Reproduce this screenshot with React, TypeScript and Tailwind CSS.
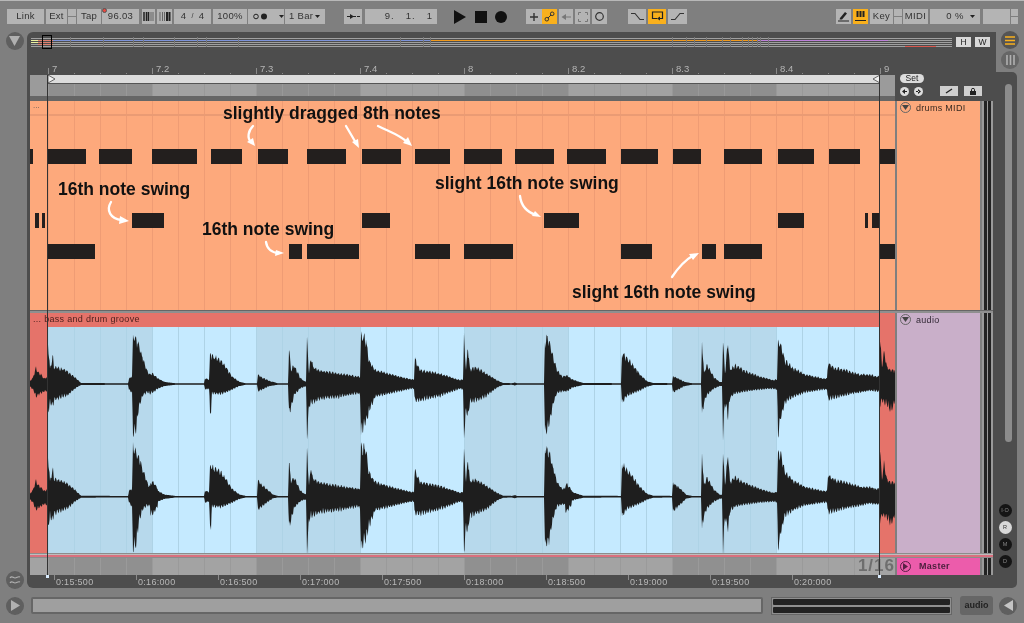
import React from "react";

const F = "font-['Liberation_Sans',Arial,sans-serif]";

function Btn({ className = "", children, on = false }: { className?: string; children?: React.ReactNode; on?: boolean }) {
  return (
    <div className={`relative shrink-0 h-[15px] flex items-center justify-center text-[9.5px] tracking-[0.3px] text-[#333] ${on ? "bg-[#f9b01c]" : "bg-[#b4b4b4]"} ${className}`}>
      {children}
    </div>
  );
}

function Stack({ className = "" }: { className?: string }) {
  return (
    <div className={`h-[15px] shrink-0 flex flex-col justify-between ${className}`}>
      <div className="h-[7px] bg-[#b4b4b4]" />
      <div className="h-[7px] bg-[#b4b4b4]" />
    </div>
  );
}

function Toolbar() {
  return (
    <div className="h-[32px] shrink-0 flex items-center pl-[7px] bg-[#7f7f7f] border-t-[1px] border-[#b8b8b8]">
      <Btn className="w-[37px]">Link</Btn>
      <Btn className="w-[21px] ml-[2px]">Ext</Btn>
      <Stack className="w-[8px] ml-[1px]" />
      <Btn className="w-[24px] ml-[1px]">Tap</Btn>
      <Btn className="w-[37px] ml-[1px]">
        96.03
        <span className="absolute left-[0px] top-[-1px] w-[5px] h-[5px] rounded-full bg-[#e8483f] border border-[#555]" />
      </Btn>
      <Btn className="w-[13px] ml-[3px]">
        <svg width="11" height="9"><path d="M1 0v9M3.5 0v9M5.5 0v9" stroke="#222" strokeWidth="1.5" /><path d="M8 0v9M10 0v9" stroke="#444" strokeWidth=".7" /></svg>
      </Btn>
      <Btn className="w-[15px] ml-[2px]">
        <svg width="12" height="9"><path d="M1 0v9M3.5 0v9M5.5 0v9" stroke="#444" strokeWidth=".7" /><path d="M8 0v9M10.5 0v9" stroke="#222" strokeWidth="2" /></svg>
      </Btn>
      <Btn className="w-[37px] ml-[2px] gap-[5px]">4 <span className="text-[7px]">/</span> 4</Btn>
      <Btn className="w-[34px] ml-[2px]">100%</Btn>
      <Btn className="w-[36px] ml-[1px] justify-start">
        <svg width="34" height="9" className="ml-[5px]">
          <circle cx="3" cy="4.5" r="2.3" fill="none" stroke="#222" />
          <circle cx="11" cy="4.5" r="3" fill="#222" />
          <path d="M26 3h5l-2.5 3z" fill="#222" />
        </svg>
      </Btn>
      <Btn className="w-[40px] ml-[1px] justify-start pl-[4px]">
        1 Bar
        <svg width="6" height="4" className="absolute right-[4px] top-[6px]"><path d="M0 0h5l-2.5 3z" fill="#222" /></svg>
      </Btn>
      <Btn className="w-[18px] ml-[19px]">
        <svg width="15" height="7"><path d="M1 3.5h3M11 3.5h3" stroke="#222" /><path d="M4 1v5l4-2.5z" fill="#222" /><path d="M7 3.5h3" stroke="#222" /></svg>
      </Btn>
      <Btn className="w-[72px] ml-[3px] justify-end pr-[4px] gap-[3px] tracking-[1px]">
        <span className="mr-[8px]">9.</span><span className="mr-[8px]">1.</span><span>1</span>
      </Btn>
      <svg width="12" height="14" className="ml-[17px] shrink-0"><path d="M0 0l12 7-12 7z" fill="#111" /></svg>
      <div className="w-[12px] h-[12px] ml-[9px] bg-[#111] shrink-0" />
      <div className="w-[12px] h-[12px] ml-[8px] rounded-full bg-[#111] shrink-0" />
      <Btn className="w-[16px] ml-[19px]">
        <svg width="10" height="10"><path d="M5 1v8M1 5h8" stroke="#333" strokeWidth="1.4" /></svg>
      </Btn>
      <Btn on className="w-[15px]">
        <svg width="11" height="11"><circle cx="2.8" cy="8.2" r="1.8" fill="none" stroke="#333" /><circle cx="8.2" cy="2.8" r="1.8" fill="none" stroke="#333" /><path d="M4 7l3-3" stroke="#333" /></svg>
      </Btn>
      <Btn className="w-[14px] ml-[2px]">
        <svg width="10" height="8"><path d="M5 4h5" stroke="#777" /><path d="M0.5 4L5 1v6z" fill="#777" /></svg>
      </Btn>
      <Btn className="w-[15px] ml-[2px]">
        <svg width="10" height="10"><path d="M0.5 3V.5H3M7 .5h2.5V3M.5 7v2.5H3M9.5 7v2.5H7" fill="none" stroke="#777" /></svg>
      </Btn>
      <Btn className="w-[15px] ml-[2px]">
        <svg width="11" height="11"><circle cx="5.5" cy="5.5" r="3.8" fill="none" stroke="#333" strokeWidth="1.2" /></svg>
      </Btn>
      <Btn className="w-[18px] ml-[21px]">
        <svg width="13" height="9"><path d="M0 1.5h4l5 6h4" fill="none" stroke="#333" strokeWidth="1.1" /></svg>
      </Btn>
      <Btn on className="w-[18px] ml-[2px]">
        <svg width="13" height="11"><path d="M6 7.5H1.5V1h10v6.5H9" fill="none" stroke="#222" strokeWidth="1.2" /><path d="M9 5.5v4L6 7.5z" fill="#222" /></svg>
      </Btn>
      <Btn className="w-[19px] ml-[2px]">
        <svg width="13" height="9"><path d="M0 7.5h4l5-6h4" fill="none" stroke="#333" strokeWidth="1.1" /></svg>
      </Btn>
      <Btn className="w-[15px] ml-[149px]">
        <svg width="11" height="11"><path d="M2 7l5-6 2 1.5-5 6-2.5 0z" fill="#222" /><path d="M0 10h11" stroke="#222" /></svg>
      </Btn>
      <Btn on className="w-[15px] ml-[2px]">
        <svg width="11" height="11"><path d="M2.5 0v6M5.5 0v6M8.5 0v6" stroke="#222" strokeWidth="2" /><path d="M0 9.5h11" stroke="#222" /></svg>
      </Btn>
      <Btn className="w-[23px] ml-[2px]">Key</Btn>
      <Stack className="w-[8px] ml-[1px]" />
      <Btn className="w-[25px] ml-[1px]">MIDI</Btn>
      <Btn className="w-[50px] ml-[2px]">
        0 %
        <svg width="6" height="4" className="absolute right-[4px] top-[6px]"><path d="M0 0h5l-2.5 3z" fill="#222" /></svg>
      </Btn>
      <Btn className="w-[27px] ml-[3px]" />
      <Stack className="w-[7px] ml-[1px]" />
    </div>
  );
}

const OV_TICKS = [70, 103, 133, 143, 174, 197, 206, 238, 400, 423, 430, 672, 686, 694, 706, 722, 730, 742, 748, 752, 757, 760, 768];

function Overview() {
  return (
    <div className="h-[10px] mt-[5px] ml-[4px] flex shrink-0">
      <div className="relative w-[921px] h-[10px]">
        {[0, 2, 4, 6, 8].map((y) => (
          <div key={y} className="absolute left-0 right-0 h-px bg-[#a0a0a0]" style={{ top: y + 1 }} />
        ))}
        <div className="absolute left-[22px] w-[377px] top-[3px] h-px bg-[#7d93d9]" />
        <div className="absolute left-[399px] w-[327px] top-[3px] h-px bg-[#f09a1e]" />
        <div className="absolute left-[726px] w-[131px] top-[3px] h-px bg-[#bd82d9]" />
        <div className="absolute left-[874px] w-[31px] top-[9px] h-px bg-[#d9584f]" />
        <div className="absolute left-0 w-[7px] top-[3px] h-px bg-[#e9f29f]" />
        <div className="absolute left-0 w-[7px] top-[5px] h-px bg-[#e9f29f]" />
        <div className="absolute left-[7px] w-[15px] top-[3px] h-px bg-[#e0806f]" />
        <div className="absolute left-[7px] w-[15px] top-[5px] h-px bg-[#e0806f]" />
        <div className="absolute left-[7px] w-[15px] top-[7px] h-px bg-[#e0806f]" />
        {OV_TICKS.map((x) => (
          <div key={x} className="absolute top-0 h-[10px] w-px bg-[#777]" style={{ left: x - 31 }} />
        ))}
        <div className="absolute left-[11px] top-[-2px] w-[10px] h-[14px] border border-black" />
      </div>
      <div className="w-[15px] h-[10px] ml-[4px] bg-[#d9d9d9] text-[8.5px] leading-[10px] text-center text-[#222]">H</div>
      <div className="w-[15px] h-[10px] ml-[4px] bg-[#d9d9d9] text-[8.5px] leading-[10px] text-center text-[#222]">W</div>
    </div>
  );
}

const BARS = ["7", "7.2", "7.3", "7.4", "8", "8.2", "8.3", "8.4", "9"];

function Ruler() {
  return (
    <div className="h-[15px] mt-[13px] ml-[21px] flex shrink-0">
      {BARS.map((b, i) => (
        <div key={b} className={`${i === 8 ? "w-[20px]" : "w-[104px]"} h-[15px] relative text-[9.5px] leading-[10px] text-[#b5b5b5] pl-[4px] pt-[4px]`}>
          <span className="absolute left-0 top-[8px] w-px h-[6px] bg-[#8a8a8a]" />
          {b}
          {i < 8 && (
            <>
              <span className="absolute left-[26px] top-[13px] w-px h-px bg-[#8a8a8a]" />
              <span className="absolute left-[52px] top-[13px] w-px h-px bg-[#8a8a8a]" />
              <span className="absolute left-[78px] top-[13px] w-px h-px bg-[#8a8a8a]" />
            </>
          )}
        </div>
      ))}
    </div>
  );
}

function Beats({ dark, light, line, className = "" }: { dark: string; light: string; line: string; className?: string }) {
  return (
    <div className={`flex h-full ${className}`}>
      {[0, 1, 2, 3, 4, 5, 6, 7].map((b) => (
        <div key={b} className="w-[104px] h-full flex" style={{ background: b % 2 === 0 ? dark : light }}>
          {[0, 1, 2, 3].map((s) => (
            <div key={s} className="w-[26px] h-full border-l" style={{ borderColor: line }} />
          ))}
        </div>
      ))}
    </div>
  );
}

const ROW1: [number, number][] = [[30, 33], [47.3, 86], [99, 132], [151.7, 197], [211, 242.3], [257.7, 288], [307, 346.3], [361.7, 401], [414.7, 449.7], [464.3, 501.7], [515.3, 553.7], [566.7, 605.7], [621.3, 657.7], [673.3, 701], [723.7, 761.7], [777.7, 814], [828.7, 859.7], [878.7, 895]];
const ROW2: [number, number][] = [[35.3, 38.7], [42, 45.3], [132.3, 163.7], [361.7, 390.3], [544.3, 579.3], [777.7, 804.3], [864.7, 868.3], [871.7, 878.7]];
const ROW3: [number, number][] = [[47.3, 94.7], [288.7, 302.3], [307, 358.7], [414.7, 450.3], [464.3, 513], [621.3, 651.7], [701.7, 716], [723.7, 761.7], [878.7, 895]];

function Notes({ row, top }: { row: [number, number][]; top: number }) {
  return (
    <>
      {row.map(([a, b]) => (
        <div key={a} className="absolute h-[15px] bg-[#231f1e]" style={{ left: a - 30, width: b - a, top }} />
      ))}
    </>
  );
}

const Note = ({ className, children }: { className: string; children: React.ReactNode }) => (
  <div className={`absolute whitespace-nowrap text-[17.5px] leading-[18px] font-bold text-[#111] ${className}`}>{children}</div>
);

function MidiLane() {
  return (
    <div className="relative h-[209px] w-[865px] bg-[#fda97c] overflow-hidden">
      <div className="absolute left-[18px] top-0 h-full">
        <Beats dark="transparent" light="transparent" line="#ef9c74" />
      </div>
      <div className="absolute left-0 top-[13px] w-full h-[2px] bg-[#ea9b74]" />
      <div className="absolute left-[3px] top-[0px] text-[8px] leading-[10px] text-[#555]">...</div>
      <Notes row={ROW1} top={48} />
      <Notes row={ROW2} top={112} />
      <Notes row={ROW3} top={143} />
      <Note className="left-[193px] top-[3px]">slightly dragged 8th notes</Note>
      <Note className="left-[28px] top-[79px]">16th note swing</Note>
      <Note className="left-[172px] top-[119px]">16th note swing</Note>
      <Note className="left-[405px] top-[73px]">slight 16th note swing</Note>
      <Note className="left-[542px] top-[182px]">slight 16th note swing</Note>
      <svg className="absolute inset-0" width="865" height="209">
        <g transform="translate(-30,-101)" fill="none" stroke="#fff" strokeWidth="2.3" strokeLinecap="round">
          <path d="M253 126C248 131 247 138 251 142" />
          <path d="M346 126L356 143" />
          <path d="M378 126C390 132 400 135 407 142" />
          <path d="M111 202C106 210 110 219 122 220" />
          <path d="M266 242C267 249 272 253 279 253" />
          <path d="M520 196C521 205 527 212 536 215" />
          <path d="M672 277C678 268 685 260 694 255" />
          <g fill="#fff" stroke="none">
            <path d="M255 146L247 142 253 138z" />
            <path d="M359 148L352 142 358 139z" />
            <path d="M412 146L403 143 408 137z" />
            <path d="M129 221L119 224 120 216z" />
            <path d="M284 253L275 256 276 250z" />
            <path d="M541 217L532 216 535 211z" />
            <path d="M699 253L693 260 689 254z" />
          </g>
        </g>
      </svg>
    </div>
  );
}

const ENV: number[][] = [
  [30, 3, 3], [33, 7, 6], [36, 17, 14], [38, 12, 12], [41, 10, 10], [44, 6, 8], [47, 7, 8], [47.5, 50, 30], [49, 30, 28], [50, 16, 20], [53, 30, 24], [54, 18, 18], [60, 17, 15], [68, 13, 12], [75, 7, 5], [81, 1, 1], [128, .7, .7],
  [129, 6, 6], [132, 8, 10], [133, 51, 55], [136, 46, 50], [139, 40, 25], [143, 28, 12], [147, 15, 9], [150, 10, 10], [153, 11, 9], [158, 6, 5], [165, 2, 2], [175, .8, .8], [204, .8, .8], [205, 6, 6], [209, 5, 5], [210, 30, 31], [211, 32, 31], [212, 30, 10], [220, 26, 11], [226, 18, 9], [232, 8, 6], [240, 2, 2], [246, .7, .7], [257, .7, .7], [258, 10, 8], [262, 7, 6], [270, 3, 2], [278, .7, .7], [288, .7, .7], [289, 38, 31], [291, 15, 25], [294, 20, 12], [300, 7, 5], [304, 3, 3], [306, 3, 3], [307, 48, 55], [309, 12, 25], [311, 30, 20], [313, 18, 20], [320, 14, 16], [340, 11, 14], [358, 8, 10], [360, 8, 12], [361, 52, 52], [366, 48, 42], [369, 25, 30], [375, 15, 14], [395, 9, 9], [411, 5, 5], [414, 5, 5], [414.7, 27, 18], [420, 15, 18], [440, 11, 13], [460, 4, 5], [463, 5, 6],
  [464, 49, 55], [466, 15, 30], [468, 40, 35], [470, 15, 20], [475, 18, 18], [485, 12, 14], [497, 4, 4], [503, 1, 1], [512, .8, .8], [515, 1.5, 1.5], [517, .8, .8], [544, .8, .8], [545, 50, 52], [549, 46, 45], [553, 30, 22], [557, 15, 10], [562, 8, 8], [567, 9, 8], [572, 5, 4], [583, 1, 1], [621, .8, .8], [622, 33, 20], [627, 28, 13], [633, 20, 10], [640, 10, 7], [647, 3, 3], [653, 1, 1], [672, .8, .8], [673, 8, 9], [678, 6, 6], [685, 2, 2], [692, .8, .8], [701, .8, .8], [702, 45, 35], [704, 12, 20], [707, 20, 12], [714, 7, 5], [720, 2, 2], [722, 2, 2], [723, 46, 55], [725, 12, 20], [728, 45, 35], [730, 15, 15], [735, 20, 10], [745, 14, 8], [760, 8, 6], [773, 4, 5], [777, 5, 6], [778, 46, 55], [781, 42, 35], [785, 25, 20], [793, 17, 14], [805, 10, 9], [823, 6, 6], [827, 6, 6], [828, 22, 17], [835, 17, 15], [845, 15, 12], [860, 10, 9], [870, 10, 7], [876, 8, 8], [879, 8, 8], [880, 50, 25], [882, 18, 18], [884, 35, 20], [887, 18, 22], [890, 15, 28], [893, 15, 25], [895, 14, 18],
];

function envAt(x: number): [number, number] {
  for (let i = 1; i < ENV.length; i++) {
    if (x <= ENV[i][0]) {
      const [x0, u0, d0] = ENV[i - 1];
      const [x1, u1, d1] = ENV[i];
      const t = (x - x0) / (x1 - x0 || 1);
      return [u0 + (u1 - u0) * t, d0 + (d1 - d0) * t];
    }
  }
  return [ENV[ENV.length - 1][1], ENV[ENV.length - 1][2]];
}

function wavePath(center: number, second: boolean, seed: number) {
  let s = seed;
  const rnd = () => {
    s = (s * 16807) % 2147483647;
    return s / 2147483647;
  };
  const top: string[] = [];
  const bot: string[] = [];
  for (let x = 30; x <= 895; x += 0.5) {
    let [u, d] = envAt(x);
    if (second) {
      u *= 1.04;
      d *= 1.05;
      if ((x > 257 && x < 272) || (x > 672 && x < 686)) {
        u *= 1.7;
        d *= 1.7;
      }
      if ((x > 150 && x < 158) || (x > 565 && x < 572)) {
        u *= 1.4;
        d *= 1.9;
      }
    }
    const comb = 0.78 + 0.22 * Math.abs(Math.sin(x * 1.1)) + (rnd() - 0.5) * 0.12;
    const comb2 = 0.7 + 0.3 * Math.abs(Math.sin(x * 1.3 + 1)) + (rnd() - 0.5) * 0.12;
    const uu = u > 2 ? u * comb : Math.max(u, 0.6);
    const dd = d > 2 ? d * comb2 : Math.max(d, 0.6);
    top.push(`${(x - 30).toFixed(1)} ${(center - uu).toFixed(1)}`);
    bot.push(`${(x - 30).toFixed(1)} ${(center + dd).toFixed(1)}`);
  }
  return "M" + top.join("L") + "L" + bot.reverse().join("L") + "Z";
}

const WAVE1 = wavePath(57, false, 12345);
const WAVE2 = wavePath(169.7, true, 6789);

function AudioLane() {
  return (
    <div className="w-[865px] h-[240px] flex flex-col">
      <div className="h-[14px] bg-[#e5736a] text-[9px] leading-[13px] text-[#4a1f1c] pl-[3px] tracking-[0.3px]">... bass and drum groove</div>
      <div className="relative h-[226px] flex bg-[#e5736a]">
        <div className="w-[18px]" />
        <div className="w-[832px] h-full">
          <Beats dark="#b7d9ec" light="#c5eaff" line="#aed3e6" />
        </div>
        <svg className="absolute inset-0" width="865" height="226">
          <path d={WAVE1} fill="#1e1e1e" />
          <path d={WAVE2} fill="#1e1e1e" />
        </svg>
      </div>
    </div>
  );
}

function Meter({ className = "" }: { className?: string }) {
  return (
    <div className={`w-[13px] flex justify-center gap-[1px] bg-[#9a9a9a] border-l-2 border-[#7f7f7f] ${className}`}>
      <div className="w-[3px] bg-[#222]" />
      <div className="w-[3px] bg-[#222]" />
    </div>
  );
}

const TriDown = () => (
  <span className="w-[11px] h-[11px] rounded-full border border-[#666] flex items-center justify-center shrink-0">
    <svg width="7" height="5"><path d="M0 0h7L3.5 5z" fill="#444" /></svg>
  </span>
);

const TIMES = ["0:15:500", "0:16:000", "0:16:500", "0:17:000", "0:17:500", "0:18:000", "0:18:500", "0:19:000", "0:19:500", "0:20:000"];

function Arrange() {
  return (
    <div className="ml-[3px] flex flex-col flex-1 min-h-0 relative">
      <div className="h-[21px] flex shrink-0">
        <div className="w-[18px] bg-[#9b9b9b]" />
        <div className="w-[832px] flex flex-col relative">
          <div className="h-[9px] bg-[#dcdcdc] border-b border-[#555] flex justify-between items-center relative">
            <svg width="8" height="8" className="absolute left-0 top-0"><path d="M0 0l7 4-7 4z" fill="#eee" stroke="#444" strokeWidth=".8" /></svg>
            <svg width="8" height="8" className="absolute right-0 top-0"><path d="M8 0L1 4l7 4z" fill="#eee" stroke="#444" strokeWidth=".8" /></svg>
          </div>
          <div className="h-[12px]">
            <Beats dark="#8f8f8f" light="#a2a2a2" line="#999" />
          </div>
        </div>
        <div className="w-[15px] bg-[#9b9b9b]" />
        <div className="w-[83px] ml-[5px] relative">
          <div className="w-[24px] h-[9px] ml-0 -mt-px rounded-full bg-[#dcdcdc] text-[8.5px] leading-[9px] text-center text-[#222]">Set</div>
          <div className="flex items-center mt-[3px]">
            <span className="w-[9px] h-[9px] rounded-full bg-[#dcdcdc] flex items-center justify-center"><svg width="5" height="5"><path d="M0 2.5L3 0v5z M2 2h3v1H2z" fill="#222" /></svg></span>
            <span className="w-[9px] h-[9px] ml-[5px] rounded-full bg-[#dcdcdc] flex items-center justify-center"><svg width="5" height="5"><path d="M5 2.5L2 0v5z M0 2h3v1H0z" fill="#222" /></svg></span>
            <span className="w-[18px] h-[10px] ml-[17px] bg-[#cfcfcf] flex items-center justify-center"><svg width="8" height="6"><path d="M1 5l6-4" stroke="#222" strokeWidth="1.4" /></svg></span>
            <span className="w-[18px] h-[10px] ml-[6px] bg-[#cfcfcf] flex items-center justify-center"><svg width="8" height="7"><path d="M2.5 3V1.8a1.5 1.5 0 013 0V3" fill="none" stroke="#222" /><path d="M1 3h6v4H1z" fill="#222" /></svg></span>
          </div>
        </div>
      </div>
      <div className="h-[5px] shrink-0 w-[865px] bg-[#666]" />
      <div className="flex shrink-0">
        <MidiLane />
        <div className="w-[85px] border-l-2 border-[#7f7f7f] bg-[#fda97c] flex items-start gap-[5px] pl-[3px] pt-[1px] text-[9px] leading-[12px] text-[#3a2a20] tracking-[0.3px]">
          <TriDown />
          <span>drums MIDI</span>
        </div>
        <Meter />
      </div>
      <div className="h-[3px] shrink-0 bg-[#8f8f8f] w-[963px] border-t border-[#666]" />
      <div className="flex shrink-0">
        <AudioLane />
        <div className="w-[85px] border-l-2 border-[#7f7f7f] bg-[#c9afc9] flex items-start gap-[5px] pl-[3px] pt-[1px] text-[9px] leading-[12px] text-[#332a36] tracking-[0.3px]">
          <TriDown />
          <span>audio</span>
        </div>
        <Meter />
      </div>
      <div className="h-[5px] shrink-0 w-[963px] flex flex-col">
        <div className="h-[1px] bg-[#8c8c8c]" />
        <div className="h-[1px] bg-[#bdbdbd]" />
        <div className="h-[2px] bg-[#d9707e]" />
        <div className="h-[1px] bg-[#8c8c8c]" />
      </div>
      <div className="h-[17px] flex shrink-0">
        <div className="w-[18px] bg-[#a3a3a3]" />
        <div className="w-[832px]">
          <Beats dark="#909090" light="#a3a3a3" line="#9a9a9a" />
        </div>
        <div className="w-[15px] bg-[#a3a3a3] relative">
          <span className="absolute right-0 top-[-2px] text-[17px] leading-[20px] font-bold tracking-[1px] whitespace-nowrap text-[#6e6e6e]">1/16</span>
        </div>
        <div className="w-[85px] border-l-2 border-[#7f7f7f] bg-[#ec5cab] flex items-center text-[9px] font-bold text-[#4a1f3c] pl-[3px] tracking-[0.3px]">
          <span className="w-[11px] h-[11px] rounded-full border border-[#5a2045] flex items-center justify-center">
            <svg width="5" height="7"><path d="M0 0l5 3.5L0 7z" fill="#5a2045" /></svg>
          </span>
          <span className="ml-[8px]">Master</span>
        </div>
        <Meter />
      </div>
      <div className="flex ml-[24px] shrink-0 h-[13px]">
        {TIMES.map((t) => (
          <div key={t} className="w-[82px] relative pl-[2px] pt-[1px] text-[9px] leading-[13px] tracking-[0.3px] text-[#b8b8b8]">
            <span className="absolute left-0 top-0 w-px h-[5px] bg-[#8a8a8a]" />
            {t}
          </div>
        ))}
      </div>
      <div className="absolute left-[17px] top-0 bottom-[10px] w-px bg-[#333]" />
      <div className="absolute left-[849px] top-0 bottom-[10px] w-px bg-[#333]" />
      <div className="absolute left-[16px] bottom-[10px] w-[3px] h-[3px] bg-[#d9ecff]" />
      <div className="absolute left-[848px] bottom-[10px] w-[3px] h-[3px] bg-[#d9ecff]" />
    </div>
  );
}

const RightDots = ["I·O", "R", "M", "D"];

function App() {
  return (
    <div className={`w-[1024px] h-[623px] overflow-hidden flex flex-col bg-[#7f7f7f] blur-[0.5px] ${F}`}>
      <Toolbar />
      <div className="flex h-[556px] shrink-0">
        <div className="w-[27px] flex flex-col items-center justify-between shrink-0">
          <div className="w-[18px] h-[18px] ml-[2px] rounded-full bg-[#5f5f5f] flex items-center justify-center">
            <svg width="11" height="10"><path d="M0 0h11L5.5 10z" fill="#b0b0b0" /></svg>
          </div>
          <div className="w-[18px] h-[18px] ml-[2px] mb-[-1px] rounded-full bg-[#5f5f5f] flex items-center justify-center">
            <svg width="12" height="10"><path d="M1 3c2-3 3 0 5 0s3-2 5-1M1 8c2-3 3 0 5 0s3-2 5-1" fill="none" stroke="#b0b0b0" strokeWidth="1.2" /></svg>
          </div>
        </div>
        <div className="w-[969px] bg-[#4d4d4d] rounded-tl-[6px] rounded-bl-[6px] flex flex-col">
          <Overview />
          <Ruler />
          <Arrange />
        </div>
        <div className="w-[28px] flex flex-col">
          <div className="h-[40px] flex flex-col items-center shrink-0">
            <div className="w-[18px] h-[18px] mt-[-1px] rounded-full bg-[#555] flex items-center justify-center">
              <svg width="10" height="9"><path d="M0 1h10M0 4.5h10M0 8h10" stroke="#f9b01c" strokeWidth="1.7" /></svg>
            </div>
            <div className="w-[18px] h-[18px] mt-[2px] rounded-full bg-[#666] flex items-center justify-center">
              <svg width="9" height="10"><path d="M1 0v10M4.5 0v10M8 0v10" stroke="#b0b0b0" strokeWidth="1.6" /></svg>
            </div>
          </div>
          <div className="w-[21px] flex-1 bg-[#4d4d4d] rounded-r-[5px] flex flex-col items-center">
            <div className="w-[7px] h-[358px] mt-[12px] ml-[4px] rounded-full bg-[#8c8c8c] shrink-0" />
            <div className="flex flex-col gap-[4px] mt-[62px] ml-[-3px]">
              {RightDots.map((d, i) => (
                <div key={d} className={`w-[13px] h-[13px] rounded-full flex items-center justify-center text-[5.5px] ${i === 1 ? "bg-[#d9d9d9] text-[#333]" : "bg-[#151515] text-[#888]"}`}>
                  {d}
                </div>
              ))}
            </div>
          </div>
        </div>
      </div>
      <div className="flex items-center h-[35px] shrink-0">
        <div className="w-[18px] h-[18px] ml-[6px] rounded-full bg-[#5f5f5f] flex items-center justify-center">
          <svg width="9" height="11"><path d="M0 0l9 5.5L0 11z" fill="#b0b0b0" /></svg>
        </div>
        <div className="w-[732px] h-[17px] ml-[7px] bg-[#9f9f9f] border-2 border-[#666] rounded-[2px]" />
        <div className="w-[181px] h-[18px] ml-[8px] bg-[#8f8f8f] border border-[#666] flex flex-col justify-center gap-[2px] px-[1px]">
          <div className="h-[6px] bg-[#222] rounded-[1px]" />
          <div className="h-[6px] bg-[#222] rounded-[1px]" />
        </div>
        <div className="w-[33px] h-[19px] ml-[8px] bg-[#666] rounded-[3px] flex items-center justify-center text-[9px] font-bold text-[#222]">audio</div>
        <div className="w-[18px] h-[18px] ml-[6px] rounded-full bg-[#5f5f5f] flex items-center justify-center">
          <svg width="9" height="11"><path d="M9 0L0 5.5 9 11z" fill="#c4c4c4" /></svg>
        </div>
      </div>
    </div>
  );
}

export default App;
